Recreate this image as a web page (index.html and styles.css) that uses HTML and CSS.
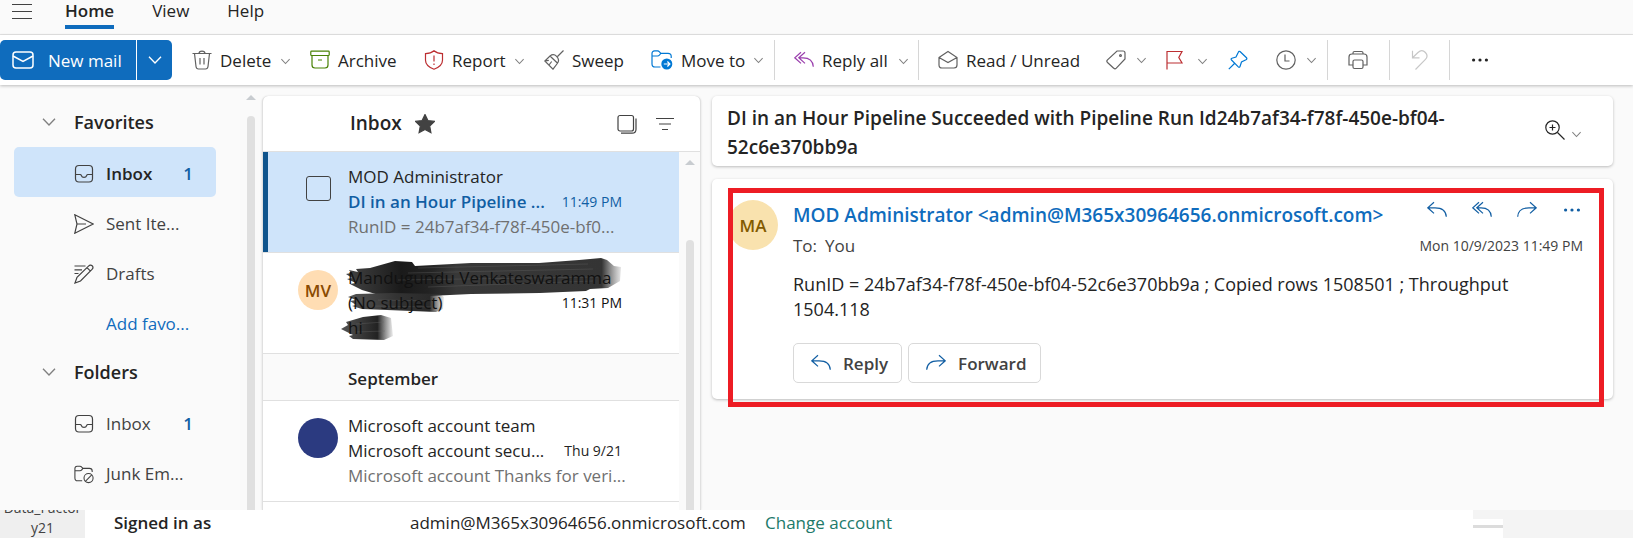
FILE: index.html
```html
<!DOCTYPE html>
<html lang="en">
<head>
<meta charset="utf-8">
<meta name="viewport" content="width=device-width, initial-scale=1">
<title>Mail - Inbox</title>
<link rel="stylesheet" href="styles.css">
</head>
<body>
<svg class="sprite" aria-hidden="true">
  <symbol id="chev" viewBox="0 0 12 12"><path d="M1.5 3.5 6 8.2l4.5-4.7"/></symbol>
  <symbol id="reply" viewBox="0 0 20 20"><path d="M7 2.2.8 7.8 7 13.4M1 7.8h7c6.500 0 11 2.800 11.300 9"/></symbol>
  <symbol id="replyall" viewBox="0 0 20 20"><path d="M7 2.200.8 7.800 7 13.400M11 2.200 4.800 7.800 11 13.400M5 7.800h4c6.500 0 10 3.500 10.300 9"/></symbol>
  <symbol id="forward" viewBox="0 0 20 20"><path d="M13 2.200l6.200 5.600L13 13.400M19 7.800h-7C5.500 7.800 1 10.600.7 16.800"/></symbol>
  <symbol id="inbox" viewBox="0 0 20 20"><rect x="1.500" y="1.500" width="17" height="16.500" rx="3.500"/><path d="M1.500 10.500h4.800c.6 0 .8.400 1 1 .9 2.600 4.500 2.600 5.400 0 .2-.6.400-1 1-1h4.800"/></symbol>
  <symbol id="dots" viewBox="0 0 20 20"><g fill="currentColor" stroke="none"><circle cx="3.600" cy="10" r="1.600"/><circle cx="10" cy="10" r="1.600"/><circle cx="16.400" cy="10" r="1.600"/></g></symbol>
</svg>

<header class="tabs">
  <button class="menu" aria-label="Menu"><svg class="icon" viewBox="0 0 20 20"><path d="M0 2.500h20M0 9.500h20M0 16.500h20"/></svg></button>
  <nav class="tab-list">
    <a class="tab current" href="#home">Home</a>
    <a class="tab" href="#view">View</a>
    <a class="tab" href="#help">Help</a>
  </nav>
</header>

<div class="toolbar" role="toolbar" aria-label="Message actions">
  <div class="split">
    <button class="new"><svg class="icon" viewBox="0 0 22 20"><rect x="1" y="2" width="20" height="16" rx="3"/><path d="m1 6 10 5.500L21 6"/></svg>New mail</button>
    <button class="new-more" aria-label="More new items"><svg class="chev"><use href="#chev"/></svg></button>
  </div>
  <button class="tool t-delete"><svg class="icon" viewBox="0 0 20 20"><path d="M.5 3.500h19M7 3.500C7 .2 13 .2 13 3.500M2.500 3.500l1.500 13c.2 1.600 1 2.500 2.500 2.500h7c1.500 0 2.300-.9 2.500-2.500l1.500-13M8 8v6.500M12 8v6.500"/></svg><span>Delete</span><svg class="chev low"><use href="#chev"/></svg></button>
  <button class="tool t-archive"><svg class="icon green" viewBox="0 0 20 20"><rect x=".8" y="1.200" width="18.400" height="4.300" rx=".8"/><path d="M2 5.500V15c0 2 1 3 3 3h10c2 0 3-1 3-3V5.500M8 10h4"/></svg><span>Archive</span></button>
  <button class="tool t-report"><svg class="icon red" viewBox="0 0 20 20"><path d="M10 .8c2.300 2 5 2.800 8.500 2.900v6.500c0 4.300-3.200 7-8.500 9-5.300-2-8.500-4.700-8.500-9V3.700C5 3.600 7.700 2.800 10 .8ZM10 5.500v6M10 13.500v1.500"/></svg><span>Report</span><svg class="chev low"><use href="#chev"/></svg></button>
  <button class="tool t-sweep"><svg class="icon" viewBox="0 0 20 20"><path d="M19.500.5 13.500 6.500M6 6c2-1.600 4.500-1.800 6.600.3s2.400 5 .7 7.200L9 19.200.8 11ZM6 6l7.600 7.300M.8 11l4-.7M5 15l2.700-3.500"/></svg><span>Sweep</span></button>
  <button class="tool t-move"><svg class="icon azure" viewBox="0 0 22 20"><path d="M9.500 17H4c-2 0-3-1-3-3V3.500C1 1.800 2 .9 3.500.9h3c1 0 1.500.4 2 1l1.300 1.400H17c2 0 3.200 1 3.200 3V8M1 6h5.500c1 0 1.500-.3 2-1l1.300-1.700"/><circle cx="15.800" cy="14" r="5.500" fill="currentColor" stroke="none"/><path d="M12.800 14h6M16.400 11.500l2.500 2.500-2.500 2.500" stroke="#fff"/></svg><span>Move to</span><svg class="chev"><use href="#chev"/></svg></button>
  <span class="rule"></span>
  <button class="tool t-replyall"><svg class="icon purple"><use href="#replyall"/></svg><span>Reply all</span><svg class="chev low"><use href="#chev"/></svg></button>
  <span class="rule"></span>
  <button class="tool t-read"><svg class="icon" viewBox="0 0 20 20"><path d="M1 7.500 10 1.500l9 6V15c0 2-1 3-3 3H4c-2 0-3-1-3-3ZM1 7.500l9 5 9-5"/></svg><span>Read / Unread</span></button>
  <button class="tool t-tag" aria-label="Categorize"><svg class="icon" viewBox="0 0 20 20"><path d="M11 1h6c1.300 0 2 .7 2 2v6L10.300 18.200c-.9.900-1.700.9-2.600 0L1.500 12.500c-.9-.9-.9-1.700 0-2.600Z"/><circle cx="14.500" cy="5.500" r=".9"/></svg><svg class="chev"><use href="#chev"/></svg></button>
  <button class="tool t-flag" aria-label="Flag"><svg class="icon red" viewBox="0 0 20 20"><path d="M2 19.500V1.500h15L13.800 7.500 17 13H2"/></svg><svg class="chev low"><use href="#chev"/></svg></button>
  <button class="tool t-pin" aria-label="Pin"><svg class="icon azure" viewBox="0 0 20 20"><path d="m12 1.500 6.500 6.200c.7.700.4 1.500-.5 2l-4.500 2.300-1.500 4.500c-.3.900-1 1-1.700.4L3.500 10c-.7-.7-.5-1.400.4-1.700L8 7l2.300-4.800c.4-.9 1.100-1.200 1.700-.7ZM6.500 13.500.8 19.200"/></svg></button>
  <button class="tool t-clock" aria-label="Snooze"><svg class="icon" viewBox="0 0 20 20"><circle cx="10" cy="10" r="9.200"/><path d="M9 4.500v6.500h4.500"/></svg><svg class="chev"><use href="#chev"/></svg></button>
  <span class="rule"></span>
  <button class="tool t-print" aria-label="Print"><svg class="icon" viewBox="0 0 20 20"><path d="M5 15H1V7c0-2 1-3 3-3h12c2 0 3 1 3 3v8h-4M5 4V3c0-1 .6-1.500 1.500-1.500h7c.9 0 1.500.5 1.500 1.500v1"/><rect x="5" y="10" width="10" height="8.500" rx="1.500"/></svg></button>
  <span class="rule"></span>
  <button class="tool t-undo" aria-label="Undo" disabled><svg class="icon faint" viewBox="0 0 20 20"><path d="M3.500.8v7h7M3.800 7.500 9 2.500c2.500-2.300 5.500-2 7.400 0 2 2.100 2 5-.2 7.200L6.500 19.500"/></svg></button>
  <span class="rule"></span>
  <button class="tool t-more" aria-label="More options"><svg class="icon"><use href="#dots"/></svg></button>
</div>

<main class="workspace">
  <aside class="folders">
    <nav class="folder-list" aria-label="Folders">
      <h2 class="group"><svg class="chev"><use href="#chev"/></svg>Favorites</h2>
      <a class="folder selected" href="#inbox"><svg class="icon"><use href="#inbox"/></svg><span>Inbox</span><b class="count">1</b></a>
      <a class="folder" href="#sent"><svg class="icon" viewBox="0 0 20 20"><path d="M.8.8 19.200 10 .8 19.200 3 10ZM3 10h9"/></svg><span>Sent Ite...</span></a>
      <a class="folder" href="#drafts"><svg class="icon" viewBox="0 0 20 20"><path d="M14.500 2.200c2.500-2.800 6 .5 3.500 3.200L6.500 17 1 19l2-5.600ZM13 3.700l3.500 3.500M.5 2h11M.5 5.800h7.500M.5 9.500H4.500"/></svg><span>Drafts</span></a>
      <a class="folder add" href="#add"><span>Add favo...</span></a>
      <h2 class="group"><svg class="chev"><use href="#chev"/></svg>Folders</h2>
      <a class="folder" href="#inbox2"><svg class="icon"><use href="#inbox"/></svg><span>Inbox</span><b class="count">1</b></a>
      <a class="folder" href="#junk"><svg class="icon" viewBox="0 0 22 20"><path d="M9 17.500H4c-2 0-3-1-3-3V4c0-1.700 1-2.600 2.500-2.600h3c1 0 1.500.3 2 1l1.300 1.400H17c2 0 3 1 3 3v1M1 6.500h5.500c1 0 1.500-.3 2-1l1.300-1.700"/><circle cx="16" cy="14.500" r="5"/><path d="m12.500 18 7-7"/></svg><span>Junk Em...</span></a>
    </nav>
    <div class="scroll"><i class="up"></i><i class="thumb"></i></div>
  </aside>

  <section class="list">
    <header class="list-head">
      <h1>Inbox</h1>
      <svg class="icon star" viewBox="0 0 20 20"><path d="m10 .5 2.900 6 6.600.9-4.800 4.600 1.200 6.600L10 15.500l-5.900 3.100L5.300 12 .5 7.400l6.600-.9Z" fill="currentColor"/></svg>
      <button class="ghost" aria-label="Select"><svg class="icon" viewBox="0 0 20 20"><rect x="1" y="1.500" width="15.500" height="15.500" rx="2"/><path d="M4 19.200h11c2.500 0 4-1.500 4-4V4.500"/></svg></button>
      <button class="ghost" aria-label="Filter"><svg class="icon" viewBox="0 0 20 20"><path d="M1 4.500h18M4 10h12M7 15.500h6"/></svg></button>
    </header>
    <div class="list-body">
      <div class="mails">
        <article class="mail selected">
          <div class="lead"><input class="tick" type="checkbox" aria-label="Select message"></div>
          <div class="text">
            <p class="from">MOD Administrator</p>
            <p class="subject"><span>DI in an Hour Pipeline ...</span><time>11:49 PM</time></p>
            <p class="preview">RunID = 24b7af34-f78f-450e-bf0...</p>
          </div>
        </article>
        <article class="mail">
          <svg class="scribble" viewBox="0 0 285 84" aria-hidden="true">
            <defs>
              <linearGradient id="g1"><stop offset="0" stop-color="#444"/><stop offset=".2" stop-color="#1a1a1a"/><stop offset=".3" stop-color="#222"/><stop offset=".4" stop-color="#383838"/><stop offset=".93" stop-color="#343434"/><stop offset="1" stop-color="#555" stop-opacity=".15"/></linearGradient>
              <linearGradient id="g2"><stop offset="0" stop-color="#555"/><stop offset=".5" stop-color="#333"/><stop offset=".85" stop-color="#2a2a2a"/><stop offset="1" stop-color="#444" stop-opacity=".1"/></linearGradient>
              <linearGradient id="g3"><stop offset="0" stop-color="#555"/><stop offset=".7" stop-color="#222"/><stop offset="1" stop-color="#444" stop-opacity=".1"/></linearGradient>
            </defs>
            <path fill="url(#g1)" d="m11 12 9 2-2-3 14-1 25-7 17 1 3 4 56-3h68l40-3 22-2 6 2 7 6 7 1-1 14-12 7-18 1-4 2-46 2-69 1-42 2-50-1-17-5-12-6 6-1-9-4 5-1-6-4 5-1Z"/>
            <path fill="url(#g2)" d="m18 36 36-1 48 1 4 3-1 12-7 3-24-1-50-2-10-3 4-1-6-4 6-1-8-3Z"/>
            <path fill="url(#g3)" d="m3 71 7-4-2-3 17-5 18-2 10 3 2 18-9 4-31-1-4-3 4-1-6-3Z"/>
            <path fill="none" stroke="#666" stroke-opacity=".5" stroke-width=".7" d="M80 10l170-4M70 15l185-4M60 22l200-3M90 29l165-6M40 42l55 1M35 48l58 1M18 66l28-2M17 74l30-1"/>
          </svg>
          <div class="lead"><span class="avatar peach">MV</span></div>
          <div class="text">
            <p class="from covered">Mandugundu Venkateswaramma</p>
            <p class="subject covered"><span>(No subject)</span><time>11:31 PM</time></p>
            <p class="preview covered">hi</p>
          </div>
        </article>
        <h3 class="month">September</h3>
        <article class="mail">
          <div class="lead"><span class="avatar navy"></span></div>
          <div class="text">
            <p class="from">Microsoft account team</p>
            <p class="subject"><span>Microsoft account secu...</span><time>Thu 9/21</time></p>
            <p class="preview">Microsoft account Thanks for veri...</p>
          </div>
        </article>
      </div>
      <div class="scroll inner"><i class="up"></i><i class="thumb"></i></div>
    </div>
  </section>

  <section class="reading">
    <header class="card title">
      <h2>DI in an Hour Pipeline Succeeded with Pipeline Run Id24b7af34-f78f-450e-bf04-52c6e370bb9a</h2>
      <button class="ghost zoom" aria-label="Zoom"><svg class="icon" viewBox="0 0 20 20"><circle cx="7.500" cy="7.500" r="6.700"/><path d="m12.500 12.500 7 7M7.500 4.500v6M4.500 7.500h6"/></svg><svg class="chev low"><use href="#chev"/></svg></button>
    </header>
    <article class="card message">
      <div class="frame"></div>
      <span class="avatar sand">MA</span>
      <div class="content">
        <div class="top">
          <div>
            <h3 class="sender">MOD Administrator &lt;admin@M365x30964656.onmicrosoft.com&gt;</h3>
            <p class="to"><span>To:</span><span>You</span></p>
          </div>
          <div class="side">
            <div class="acts">
              <button class="ghost" aria-label="Reply"><svg class="icon"><use href="#reply"/></svg></button>
              <button class="ghost" aria-label="Reply all"><svg class="icon"><use href="#replyall"/></svg></button>
              <button class="ghost" aria-label="Forward"><svg class="icon"><use href="#forward"/></svg></button>
              <button class="ghost" aria-label="More"><svg class="icon"><use href="#dots"/></svg></button>
            </div>
            <time>Mon 10/9/2023 11:49 PM</time>
          </div>
        </div>
        <p class="body-text">RunID = 24b7af34-f78f-450e-bf04-52c6e370bb9a ; Copied rows 1508501 ; Throughput 1504.118</p>
        <div class="replies">
          <button class="outline"><svg class="icon"><use href="#reply"/></svg>Reply</button>
          <button class="outline"><svg class="icon"><use href="#forward"/></svg>Forward</button>
        </div>
      </div>
    </article>
  </section>
</main>

<footer class="account">
  <div class="factory">Data_Factor<br>y21</div>
  <strong class="signed">Signed in as</strong>
  <span class="email">admin@M365x30964656.onmicrosoft.com</span>
  <a class="change" href="#change">Change account</a>
  <div class="end"><i></i></div>
  <div class="end-block"></div>
</footer>
</body>
</html>
```
FILE: styles.css
```css
* { box-sizing: border-box; }
html, body { height: 100%; }
body {
  margin: 0;
  display: flex;
  flex-direction: column;
  overflow: hidden;
  background: #fafafa;
  color: #242424;
  font: 17px/25px "Open Sans", "Noto Sans", sans-serif;
}
h1, h2, h3, p { margin: 0; font-weight: 400; font-size: inherit; }
a { color: inherit; text-decoration: none; }
button { font: inherit; color: inherit; background: none; border: 0; padding: 0; display: flex; align-items: center; }
.sprite { position: absolute; width: 0; height: 0; }
.icon { width: 20px; height: 20px; flex: none; fill: none; stroke: currentColor; stroke-width: 1.2; color: #616161; }
.chev { width: 11px; height: 11px; flex: none; fill: none; stroke: #808080; stroke-width: 1.1; }
.chev.low { margin-top: 3px; }
.green { color: #498205; }
.red { color: #bc2f32; }
.azure { color: #0078d4; }
.purple { color: #9a3ead; }
.faint { color: #c7c7c7; }

.tabs { flex: none; height: 35px; display: flex; gap: 33px; padding-left: 12px; border-bottom: 1px solid #e5e5e5; }
.menu { height: 23px; }
.menu .icon { color: #424242; }
.tab-list { display: flex; gap: 38px; }
.tab { height: 29px; line-height: 21px; }
.tab.current { font-weight: 600; border-bottom: 4px solid #0f6cbd; }

.toolbar { flex: none; position: relative; height: 50px; display: flex; align-items: center; background: #fff; box-shadow: 0 1px 3px rgba(0, 0, 0, .25); white-space: nowrap; }
.split { display: flex; gap: 1px; height: 40px; width: 172px; margin-right: 20px; color: #fff; }
.split button { background: #0f6cbd; }
.split .icon { color: #fff; width: 22px; stroke-width: 1.5; }
.split .chev { width: 16px; height: 16px; stroke: #fff; stroke-width: 1; }
.new { flex: 1; gap: 14px; padding-left: 12px; border-radius: 5px 0 0 5px; }
.new-more { width: 35px; justify-content: center; border-radius: 0 5px 5px 0; }
.tool { height: 40px; gap: 8px; flex: none; }
.tool .chev { margin-left: auto; }
.rule { width: 1px; height: 40px; background: #d6d6d6; flex: none; }
.t-delete { width: 99px; margin-right: 19px; }
.t-archive { width: 96px; margin-right: 18px; }
.t-report { width: 101px; margin-right: 19px; }
.t-sweep { width: 90px; margin-right: 17px; }
.t-move { width: 112px; margin-right: 11px; }
.t-move .icon { width: 22px; }
.t-replyall { width: 115px; margin: 0 9px 0 19px; }
.t-read { width: 140px; margin: 0 28px 0 19px; }
.t-tag { width: 41px; margin-right: 18px; }
.t-flag { width: 43px; margin-right: 20px; }
.t-pin { width: 20px; margin-right: 28px; }
.t-clock { width: 41px; margin-right: 10px; }
.t-print { margin: 0 21px 0 20px; }
.t-undo { margin: 0 20px 0 19px; }
.t-more { margin: 0 20px; }
.t-more .icon { color: #242424; }

.workspace { flex: 1; min-height: 0; display: flex; overflow: hidden; }
.folders { flex: none; width: 262px; display: flex; justify-content: space-between; }
.folder-list { width: 216px; padding: 12px 0 0 14px; }
.group { height: 50px; display: flex; align-items: center; gap: 17px; padding-left: 27px; font-weight: 600; font-size: 18px; }
.group .chev { width: 16px; height: 16px; stroke-width: 1; }
.folder { height: 50px; display: flex; align-items: center; gap: 12px; padding: 3px 23px 0 60px; border-radius: 5px; white-space: nowrap; color: #424242; }
.folder .icon { color: #424242; }
.folder.selected { background: #cfe4fa; font-weight: 600; color: #242424; }
.count { margin-left: auto; color: #115ea3; font-weight: 600; }
.folder.add { padding-left: 92px; color: #0f6cbd; }
.scroll { width: 10px; margin-right: 6px; padding-top: 10px; display: flex; flex-direction: column; align-items: center; gap: 16px; }
.up { border: 5px solid transparent; border-top: 0; border-bottom-color: #c8ccd0; }
.thumb { flex: 1; width: 8px; background: #e0e0e0; border-radius: 4px 4px 0 0; }

.list { flex: 0 1 439px; min-width: 0; display: flex; flex-direction: column; margin-top: 11px; background: #fff; border: 1px solid #e0e0e0; border-width: 0 1px; border-radius: 6px 6px 0 0; box-shadow: 0 0 2px rgba(0, 0, 0, .15); }
.list-head { height: 56px; flex: none; display: flex; align-items: center; padding: 0 25px 0 87px; border-bottom: 1px solid #e0e0e0; }
.list-head h1 { font-size: 19px; font-weight: 600; }
.star { margin: 0 auto 0 13px; }
.star, .list-head .icon { color: #424242; }
.ghost { flex: none; }
.list-head .ghost { margin-left: 18px; }
.list-body { flex: 1; min-height: 0; display: flex; }
.mails { flex: 1; min-width: 0; }
.mail { position: relative; height: 101px; display: flex; padding: 12px 57px 0 0; border-bottom: 1px solid #e0e0e0; white-space: nowrap; }
.mail.selected { background: #cfe4fa; }
.mail.selected::before { content: ""; position: absolute; left: 0; top: 0; bottom: 0; width: 5px; background: #0f548c; }
.lead { flex: none; width: 85px; padding: 5px 10px 0 0; display: flex; justify-content: flex-end; align-items: flex-start; }
.tick { appearance: none; width: 25px; height: 25px; margin: 7px 7px 0 0; border: 1px solid #424242; border-radius: 3px; }
.text { flex: 1; min-width: 0; position: relative; }
.subject { display: flex; justify-content: space-between; }
.selected .subject { color: #115ea3; font-weight: 600; }
.mail time { font-size: 14px; font-weight: 400; }
.preview { color: #707070; }
.covered { color: #111; }
.scribble { position: absolute; left: 75px; top: 5px; width: 285px; height: 84px; }
.month { height: 47px; line-height: 49px; padding-left: 85px; background: #fafafa; border-bottom: 1px solid #e0e0e0; font-weight: 600; }
.avatar { display: flex; align-items: center; justify-content: center; width: 40px; height: 40px; border-radius: 50%; font-weight: 600; }
.peach { background: #ffddb3; color: #8a4b00; }
.navy { background: #2b3a80; }
.inner { width: 21px; margin: 0; padding-top: 8px; gap: 75px; background: #fafafa; }

.reading { flex: 1; min-width: 0; padding: 11px 20px 0 11px; }
.card { position: relative; background: #fff; border-radius: 5px; box-shadow: 0 1px 3px rgba(0, 0, 0, .25); }
.title { display: flex; align-items: center; justify-content: space-between; padding: 8px 31px 4px 15px; margin-bottom: 13px; }
.title h2 { max-width: 760px; font-size: 19px; line-height: 29px; font-weight: 600; }
.zoom { gap: 6px; margin-top: -6px; }
.zoom .icon { color: #242424; }
.zoom .chev.low { margin-top: 8px; }
.message { display: flex; align-items: flex-start; gap: 15px; padding: 21px 30px 16px 16px; }
.frame { position: absolute; inset: 9px 9px -8px 16px; border: 5px solid #ed1c24; pointer-events: none; }
.sand { flex: none; width: 50px; height: 50px; background: #f9e2ae; color: #835b00; }
.content { flex: 1; min-width: 0; }
.top { display: flex; justify-content: space-between; min-height: 60px; }
.sender { font-size: 19px; line-height: 31px; font-weight: 600; color: #0f6cbd; white-space: nowrap; }
.to { display: flex; gap: 8px; line-height: 29px; color: #424242; }
.side { display: flex; flex-direction: column; align-items: flex-end; gap: 13px; white-space: nowrap; color: #424242; }
.acts { display: flex; gap: 25px; padding-right: 1px; }
.acts .icon { color: #115ea3; }
.side time { font-size: 14px; }
.body-text { max-width: 740px; padding-top: 12px; font-size: 18px; }
.replies { display: flex; gap: 6px; margin-top: 21px; }
.outline { height: 40px; gap: 12px; padding: 0 13px 0 17px; border: 1px solid #d9d9d9; border-radius: 5px; font-weight: 600; color: #424242; }
.outline .icon { color: #115ea3; }

.account { flex: none; position: relative; height: 28px; display: flex; background: #fff; line-height: 26px; white-space: nowrap; overflow: hidden; }
.factory { width: 85px; flex: none; background: #efefef; font-size: 14px; line-height: 20px; text-align: center; color: #424242; margin-top: -12px; padding: 0 0 0 -10px; }
.signed { width: 325px; padding-left: 29px; font-weight: 600; }
.email { width: 355px; }
.change { color: #217a6a; }
.end { margin-left: auto; width: 30px; border-top: 9px solid #f4f4f4; padding-top: 6px; }
.end i { display: block; height: 3px; background: #dcdcdc; }
.end-block { width: 130px; background: #f4f4f4; }
```
